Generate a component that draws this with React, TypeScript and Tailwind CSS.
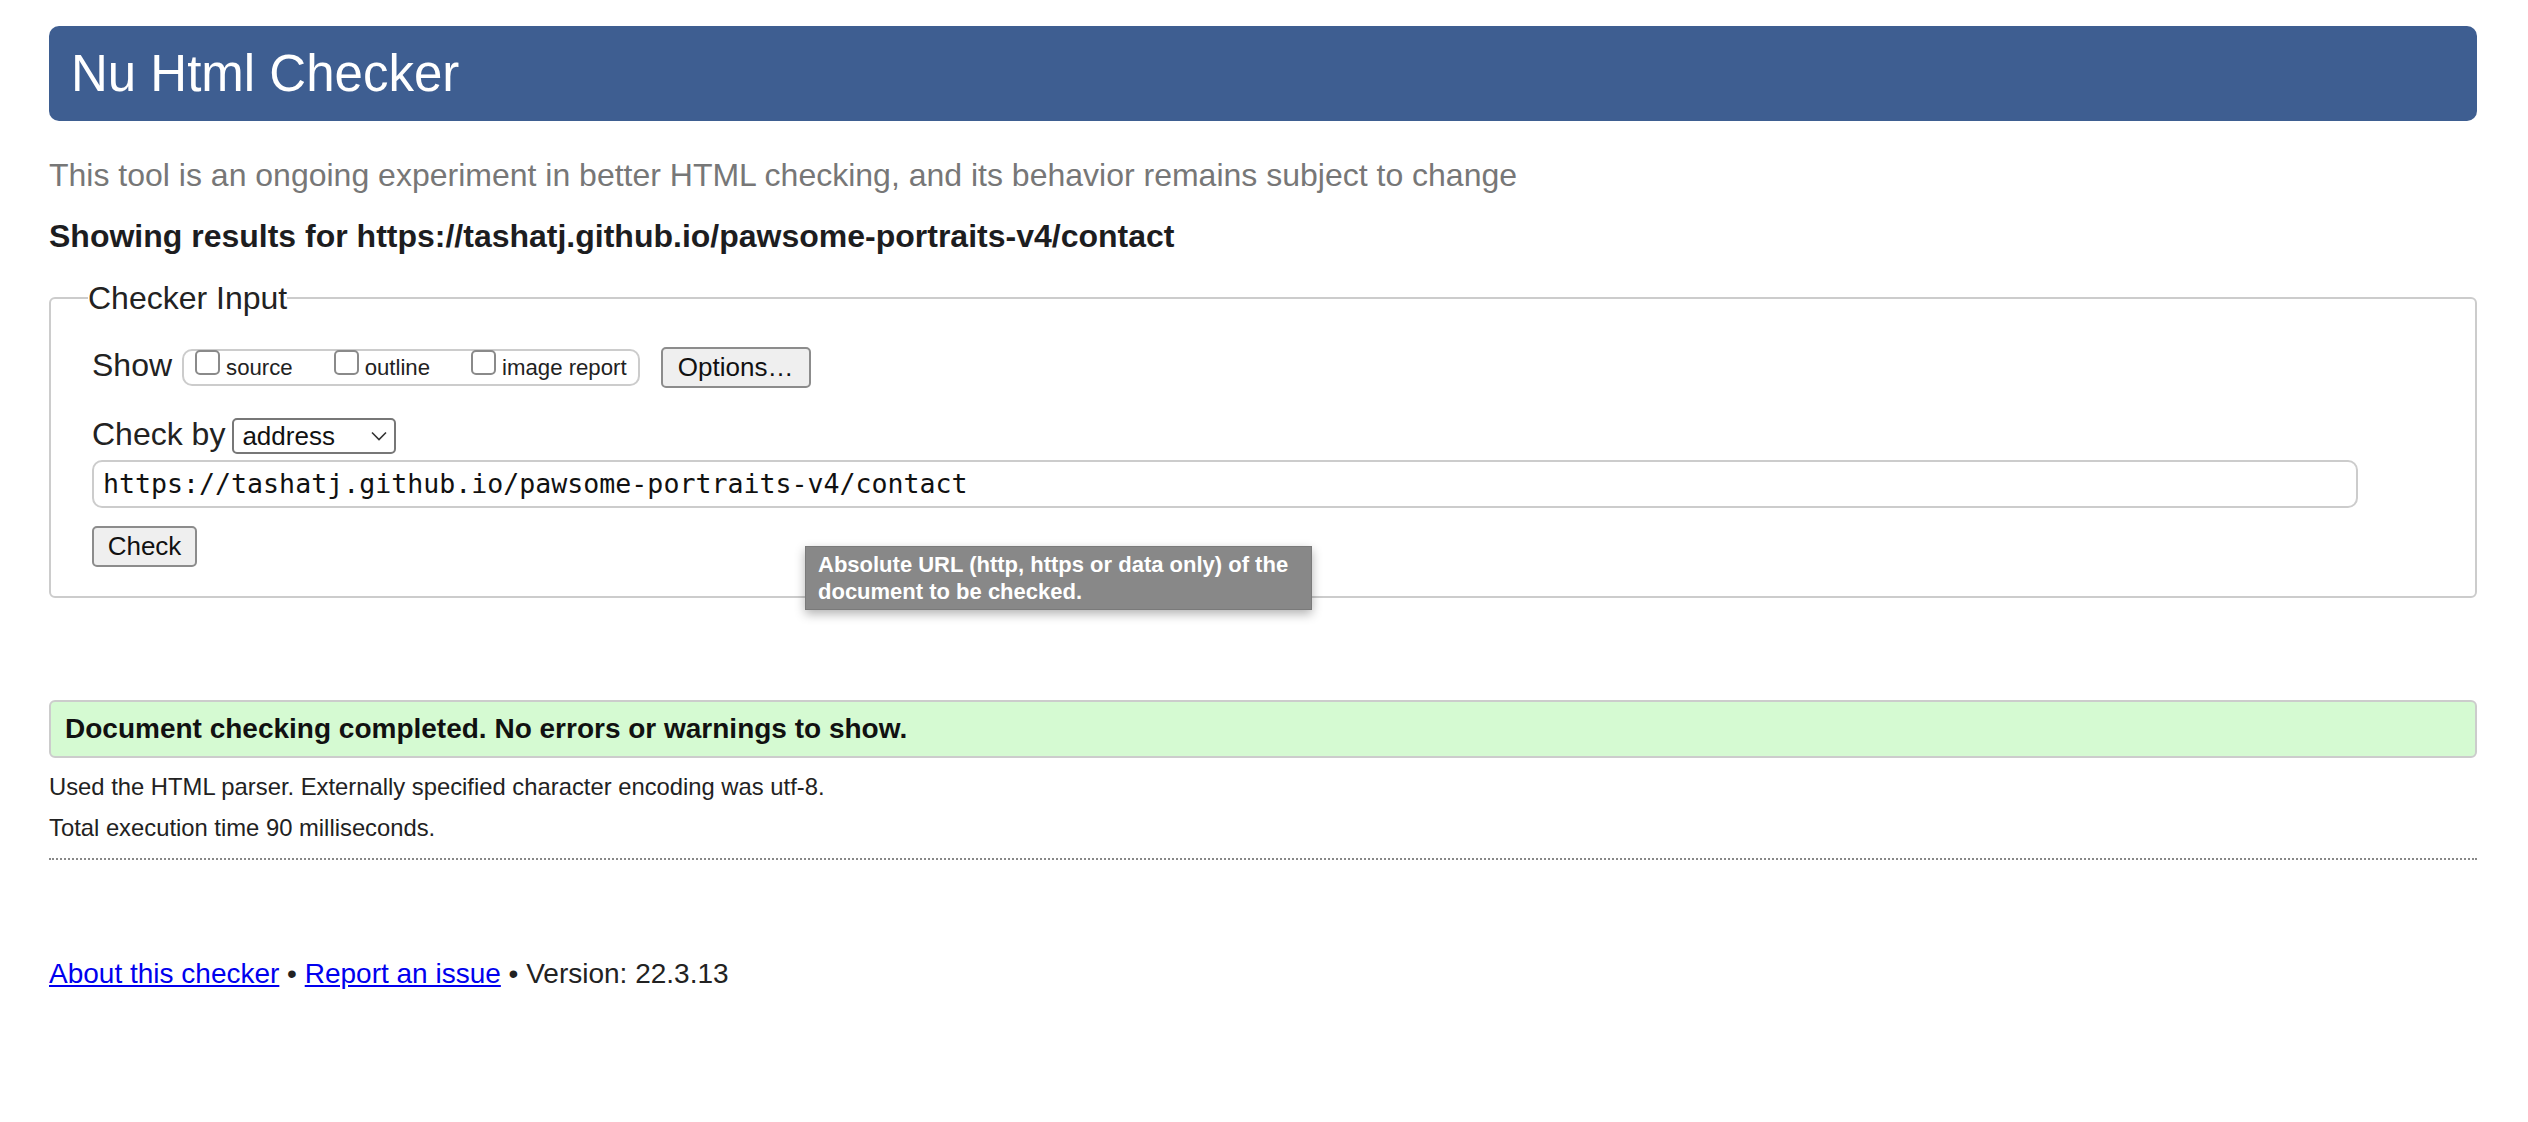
import React from "react";

function Box() {
  return (
    <span className="block w-[25px] h-[25px] mt-[-1px] shrink-0 border-2 border-[#8a8a8a] rounded-[5px] bg-white" />
  );
}

export default function App() {
  return (
    <div className="relative min-h-[1122px] bg-white pl-[49px] pr-[51px] pt-[26px] font-['Liberation_Sans',Arial,sans-serif] text-[#222]">
      <h1 className="h-[95px] rounded-[10px] bg-[#3e5e91] pl-[22px] text-[51px] leading-[95px] text-white">
        Nu Html Checker
      </h1>
      <p className="mt-[34px] text-[32px] leading-[40px] text-[#777]">
        This tool is an ongoing experiment in better HTML checking, and its behavior remains subject to change
      </p>
      <p className="mt-[20.6px] text-[32px] font-bold leading-[40px] text-[#1d1d1f]">
        Showing results for https://tashatj.github.io/pawsome-portraits-v4/contact
      </p>

      <fieldset className="mt-[25.4px] border-2 border-[#cccccc] rounded-[6px] pl-[41px] pr-[41px] pt-[31.5px] pb-[29px]">
        <legend className="-ml-[4px] text-[32px] leading-[34px] text-[#222]">Checker Input</legend>

        <div className="flex items-center h-[42px]">
          <span className="mb-[5px] text-[32px] leading-[36px]">Show</span>
          <div className="ml-[10px] h-[37px] border-2 border-[#cccccc] rounded-[10px] flex items-start px-[11px]">
            <Box />
            <span className="ml-[6px] mt-[4.5px] text-[22.2px] leading-[26px]">source</span>
            <span className="ml-[41px]"><Box /></span>
            <span className="ml-[6px] mt-[4.5px] text-[22.2px] leading-[26px]">outline</span>
            <span className="ml-[41px]"><Box /></span>
            <span className="ml-[6px] mt-[4.5px] text-[22.2px] leading-[26px]">image report</span>
          </div>
          <div className="ml-[21px] w-[150px] h-[41px] border-2 border-[#8c8c8c] rounded-[5px] bg-[#efefef] flex items-center justify-center text-[26px] text-[#111]">
            Options…
          </div>
        </div>

        <div className="mt-[29.5px] flex items-center h-[36px]">
          <span className="mb-[4px] text-[32px] leading-[36px]">Check by</span>
          <div className="ml-[7px] w-[164px] h-[36px] border-2 border-[#777] rounded-[5px] bg-white flex items-center justify-between pl-[8px] pr-[7px]">
            <span className="text-[26px] leading-[30px] text-[#111]">address</span>
            <svg width="16" height="10" viewBox="0 0 16 10" fill="none">
              <path d="M1 1.5 L8 8.5 L15 1.5" stroke="#333" strokeWidth="1.6" />
            </svg>
          </div>
        </div>

        <div className="mt-[6px] w-[2266px] h-[48px] border-2 border-[#cccccc] rounded-[10px] flex items-center pl-[9px] font-['DejaVu_Sans_Mono',monospace] text-[26.6px] text-[#111]">
          https://tashatj.github.io/pawsome-portraits-v4/contact
        </div>

        <div className="mt-[18px] w-[105px] h-[41px] border-2 border-[#8c8c8c] rounded-[5px] bg-[#efefef] flex items-center justify-center text-[26px] text-[#111]">
          Check
        </div>
      </fieldset>

      <div className="mt-[102px] h-[58px] border-2 border-[#cccccc] rounded-[6px] bg-[#d5fad2] flex items-center pl-[14px] text-[28px] font-bold text-[#111]">
        Document checking completed. No errors or warnings to show.
      </div>
      <p className="mt-[13.8px] text-[23.8px] leading-[30px] text-[#222]">
        Used the HTML parser. Externally specified character encoding was utf-8.
      </p>
      <p className="mt-[11.7px] text-[23.8px] leading-[30px] text-[#222]">
        Total execution time 90 milliseconds.
      </p>
      <div className="mt-[14.5px] border-t-2 border-dotted border-[#888]" />

      <p className="mt-[96.6px] text-[28px] leading-[34px] text-[#222]">
        <a href="#" className="text-[#0000ee] underline">About this checker</a>
        {" • "}
        <a href="#" className="text-[#0000ee] underline">Report an issue</a>
        {" • Version: 22.3.13"}
      </p>

      <div className="absolute left-[805px] top-[546px] w-[507px] h-[64px] bg-[#888888] border border-[#7a7a7a] shadow-[0_4px_10px_rgba(0,0,0,0.3)] pl-[12px] pt-[4px] text-[22px] font-bold leading-[27px] text-white">
        Absolute URL (http, https or data only) of the
        <br />
        document to be checked.
      </div>
    </div>
  );
}
